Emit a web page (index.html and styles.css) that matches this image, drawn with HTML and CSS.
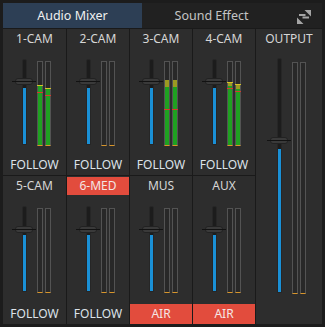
FILE: index.html
```html
<!DOCTYPE html>
<html lang="en">
<head>
    <meta charset="UTF-8">
    <title>Audio Mixer</title>
    <link rel="stylesheet" href="styles.css">
</head>
<body>
    <div class="mixer">
        <div class="tabs">
            <div class="tab active">Audio Mixer</div>
            <div class="tab">Sound Effect</div>
            <button class="swap" title="Swap">
                <svg width="16" height="16" viewBox="0 0 16 16" fill="currentColor">
                    <path d="M3 6h6.5v2H3z M8.5 2h6.5v6.5z" />
                    <path d="M6.5 8.5H13v2H6.5z M1 9.5l6.5 6.5H1z" />
                </svg>
            </button>
        </div>

        <div class="channels">
            <!-- 1-CAM -->
            <div class="strip">
                <div class="strip-name">1-CAM</div>
                <div class="strip-body">
                    <div class="fader">
                        <div class="slot"><div class="fill" style="top: 28px"></div></div>
                        <div class="knob" style="top: 19px"></div>
                    </div>
                    <div class="meter">
                        <div class="level" style="top: 24px"></div>
                        <div class="mark peak" style="top: 23px"></div>
                        <div class="mark hold" style="top: 30px"></div>
                    </div>
                    <div class="meter">
                        <div class="level" style="top: 27px"></div>
                        <div class="mark peak" style="top: 26px"></div>
                        <div class="mark hold" style="top: 33px"></div>
                    </div>
                </div>
                <div class="strip-foot">FOLLOW</div>
            </div>

            <!-- 2-CAM -->
            <div class="strip">
                <div class="strip-name">2-CAM</div>
                <div class="strip-body">
                    <div class="fader">
                        <div class="slot"><div class="fill" style="top: 28px"></div></div>
                        <div class="knob" style="top: 19px"></div>
                    </div>
                    <div class="meter"></div>
                    <div class="meter"></div>
                </div>
                <div class="strip-foot">FOLLOW</div>
            </div>

            <!-- 3-CAM -->
            <div class="strip">
                <div class="strip-name">3-CAM</div>
                <div class="strip-body">
                    <div class="fader">
                        <div class="slot"><div class="fill" style="top: 28px"></div></div>
                        <div class="knob" style="top: 19px"></div>
                    </div>
                    <div class="meter">
                        <div class="level" style="top: 25px"></div>
                        <div class="clip" style="top: 18px; height: 7px"></div>
                        <div class="mark hold" style="top: 47px"></div>
                    </div>
                    <div class="meter">
                        <div class="level" style="top: 25px"></div>
                        <div class="clip" style="top: 18px; height: 7px"></div>
                        <div class="mark hold" style="top: 47px"></div>
                    </div>
                </div>
                <div class="strip-foot">FOLLOW</div>
            </div>

            <!-- 4-CAM -->
            <div class="strip">
                <div class="strip-name">4-CAM</div>
                <div class="strip-body">
                    <div class="fader">
                        <div class="slot"><div class="fill" style="top: 28px"></div></div>
                        <div class="knob" style="top: 19px"></div>
                    </div>
                    <div class="meter">
                        <div class="level" style="top: 24px"></div>
                        <div class="clip" style="top: 21px; height: 3px"></div>
                        <div class="mark peak" style="top: 20px"></div>
                        <div class="mark hold" style="top: 26px"></div>
                    </div>
                    <div class="meter">
                        <div class="level" style="top: 27px"></div>
                        <div class="clip" style="top: 23px; height: 4px"></div>
                        <div class="mark peak" style="top: 22px"></div>
                        <div class="mark hold" style="top: 29px"></div>
                    </div>
                </div>
                <div class="strip-foot">FOLLOW</div>
            </div>

            <!-- OUTPUT -->
            <div class="strip output">
                <div class="strip-name">OUTPUT</div>
                <div class="strip-body">
                    <div class="fader">
                        <div class="slot"><div class="fill" style="top: 90px"></div></div>
                        <div class="knob" style="top: 79px"></div>
                    </div>
                    <div class="meter"></div>
                    <div class="meter"></div>
                </div>
            </div>

            <!-- 5-CAM -->
            <div class="strip">
                <div class="strip-name">5-CAM</div>
                <div class="strip-body">
                    <div class="fader">
                        <div class="slot"><div class="fill" style="top: 28px"></div></div>
                        <div class="knob" style="top: 20px"></div>
                    </div>
                    <div class="meter"></div>
                    <div class="meter"></div>
                </div>
                <div class="strip-foot">FOLLOW</div>
            </div>

            <!-- 6-MED -->
            <div class="strip">
                <div class="strip-name on-air">6-MED</div>
                <div class="strip-body">
                    <div class="fader">
                        <div class="slot"><div class="fill" style="top: 28px"></div></div>
                        <div class="knob" style="top: 20px"></div>
                    </div>
                    <div class="meter"></div>
                    <div class="meter"></div>
                </div>
                <div class="strip-foot">FOLLOW</div>
            </div>

            <!-- MUS -->
            <div class="strip">
                <div class="strip-name">MUS</div>
                <div class="strip-body">
                    <div class="fader">
                        <div class="slot"><div class="fill" style="top: 28px"></div></div>
                        <div class="knob" style="top: 20px"></div>
                    </div>
                    <div class="meter"></div>
                    <div class="meter"></div>
                </div>
                <div class="strip-foot on-air">AIR</div>
            </div>

            <!-- AUX -->
            <div class="strip">
                <div class="strip-name">AUX</div>
                <div class="strip-body">
                    <div class="fader">
                        <div class="slot"><div class="fill" style="top: 28px"></div></div>
                        <div class="knob" style="top: 20px"></div>
                    </div>
                    <div class="meter"></div>
                    <div class="meter"></div>
                </div>
                <div class="strip-foot on-air">AIR</div>
            </div>
        </div>
    </div>
</body>
</html>
```

FILE: styles.css
```css
* {
    margin: 0;
    padding: 0;
    box-sizing: border-box;
}

body {
    font-family: 'Noto Sans', 'Open Sans', sans-serif;
    font-size: 12px;
    background: #1c1c1c;
    color: #dcdcdc;
    padding: 3px;
}

.mixer {
    width: 319px;
    height: 321px;
    display: flex;
    flex-direction: column;
    gap: 1px;
    background: #1a1a1a;
}

/* Tabs */
.tabs {
    height: 25px;
    display: flex;
    background: #212121;
}

.tab {
    width: 139px;
    line-height: 25px;
    text-align: center;
    font-size: 12.5px;
    color: #c4c4c4;
}

.tab.active {
    background: #2d3f55;
    color: #f0f0f0;
}

.swap {
    margin-left: auto;
    width: 41px;
    border: none;
    background: none;
    color: #a4a4a4;
    display: flex;
    align-items: center;
    justify-content: center;
    padding-left: 5px;
}

/* Channel grid */
.channels {
    flex: 1;
    display: grid;
    grid-template-columns: 63px 62px 62px 62px 66px;
    grid-template-rows: 146px 148px;
    gap: 1px;
}

.strip {
    background: #2d2d2d;
    display: flex;
    flex-direction: column;
}

.strip.output {
    grid-column: 5;
    grid-row: 1 / span 2;
}

.strip-name {
    margin-top: 1px;
    height: 18px;
    line-height: 18px;
    text-align: center;
    color: #d6d6d6;
}

.strip-body {
    flex: 1;
    display: flex;
    align-items: flex-start;
    padding: 11px 0 0 9px;
}

.output .strip-body {
    padding: 10px 0 0 11px;
}

.strip-foot {
    height: 20px;
    line-height: 20px;
    text-align: center;
    color: #dde3ea;
}

.on-air {
    background: #e24c3d;
    color: #f4e6e4;
}

/* Fader */
.fader {
    position: relative;
    width: 24px;
    height: 86px;
    margin-right: 1px;
}

.output .fader {
    height: 235px;
}

.slot {
    position: absolute;
    left: 10px;
    top: 0;
    bottom: 0;
    width: 5px;
    background: #1c1c1c;
    border: 1px solid #262626;
    border-radius: 2px 2px 1px 1px;
}

.fill {
    position: absolute;
    left: 0;
    right: 0;
    bottom: 0;
    background: #1a90d6;
}

.knob {
    position: absolute;
    left: 3px;
    width: 18px;
    height: 7px;
    background: #3a3a3a;
    border: 1px solid #222;
    border-radius: 3px;
}

.knob::before {
    content: "";
    position: absolute;
    left: -4px;
    right: -4px;
    top: 2px;
    height: 1px;
    background: #121212;
}

/* Meters */
.meter {
    position: relative;
    width: 6px;
    height: 85px;
    margin: 2px 2px 0 0;
    background: #282828;
    border: 1px solid #535353;
    border-bottom-color: #d8952a;
}

.output .meter {
    height: 232px;
    margin-top: 4px;
}

.level {
    position: absolute;
    left: 0;
    right: 0;
    bottom: 0;
    background: #1fa121;
}

.clip {
    position: absolute;
    left: 0;
    right: 0;
    background: #9c9a22;
}

.mark {
    position: absolute;
    left: -1px;
    right: -1px;
    height: 1px;
}

.mark.peak {
    background: #d6c228;
}

.mark.hold {
    background: #d63a2c;
}
```
